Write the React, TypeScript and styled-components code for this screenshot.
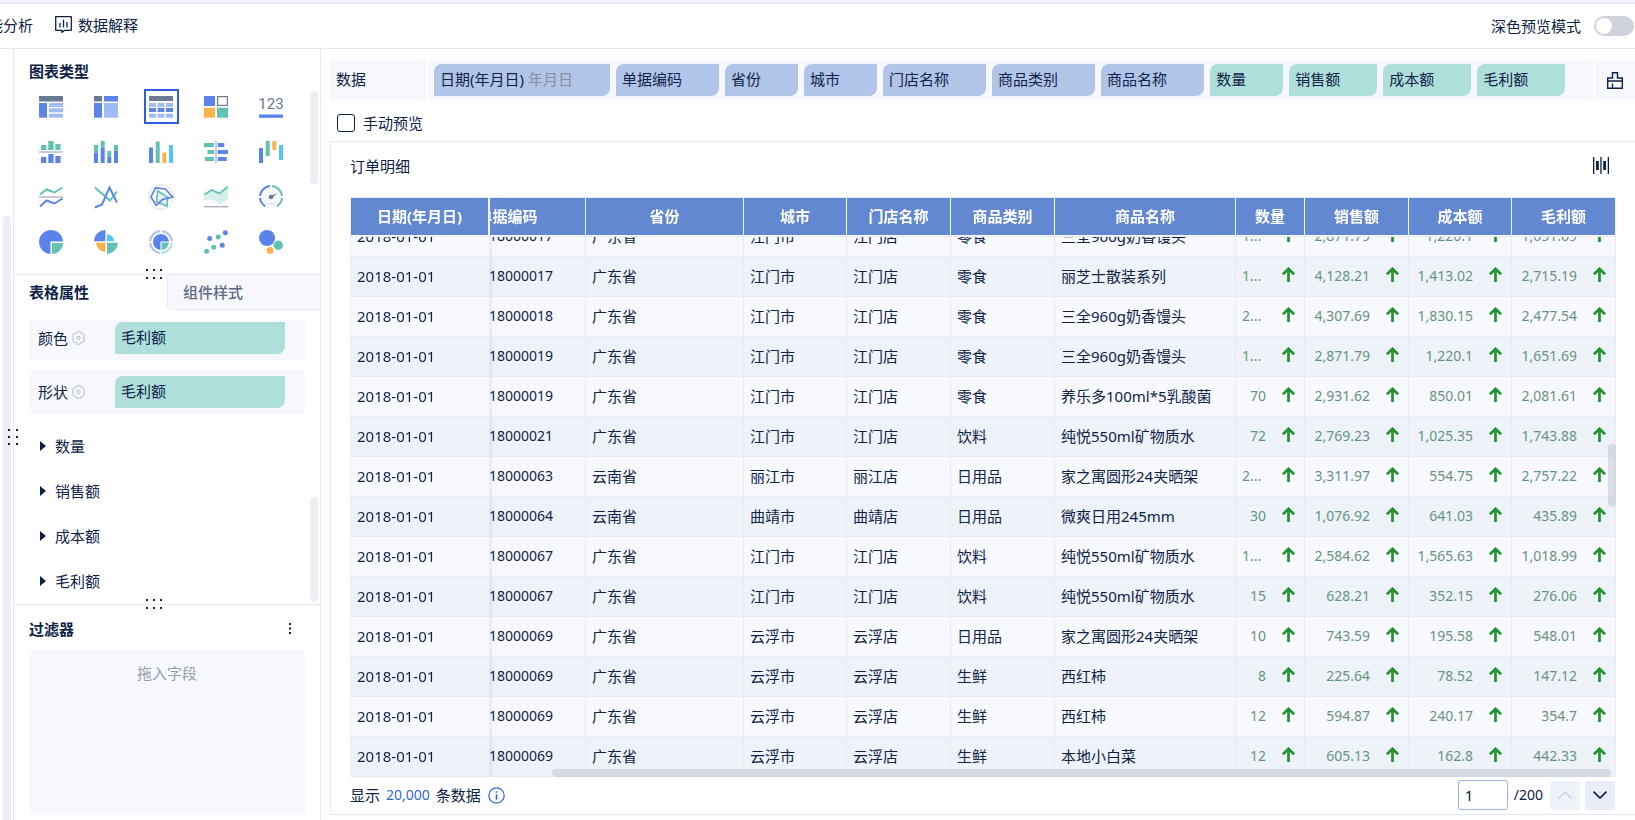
import React, { useLayoutEffect, useRef } from "react";
import styled, { createGlobalStyle } from "styled-components";

const INK = "#0e2247";
const LINE = "#e4e8f2";
const BLUE = "#5b84ea";
const SKY = "#9fbcf5";
const TEAL = "#62c0b5";
const ORANGE = "#fdb24c";
const CYAN = "#52c7f5";
const SLATE = "#6b7a93";
const SILVER = "#c6cbd5";

const GlobalStyle = createGlobalStyle`
  * { box-sizing: border-box; }
  body {
    margin: 0;
    color: ${INK};
    background: #fff;
    font-family: "Noto Sans", "Noto Sans CJK SC", sans-serif;
    font-size: 15px;
    line-height: 20px;
  }
  button, input { font: inherit; color: inherit; }
  button { padding: 0; border: 0; background: none; cursor: pointer; }
  svg { display: block; flex: none; }
  h2 { margin: 0; font-size: 15px; line-height: 20px; }
`;

const Page = styled.div`
  display: flex;
  flex-direction: column;
  height: 100vh;
  overflow: hidden;
`;

const TopBar = styled.header`
  display: flex;
  align-items: center;
  justify-content: space-between;
  flex: none;
  height: 49px;
  padding: 0 1px 0 0;
  border-top: 3px solid #edf1f8;
  border-bottom: 1px solid ${LINE};
  box-shadow: inset 0 1px 0 ${LINE};
`;

const Nav = styled.nav`
  display: flex;
  gap: 22px;
  margin-left: -27px;
  padding-bottom: 2px;
`;

const NavButton = styled.button`
  display: flex;
  align-items: center;
  gap: 6px;
`;

const SwitchLabel = styled.label`
  display: flex;
  align-items: center;
  gap: 13px;
`;

const Switch = styled.input`
  appearance: none;
  width: 40px;
  height: 20px;
  margin: 0;
  padding: 2px;
  border-radius: 10px;
  background: #cfd2da;
  &::before {
    content: "";
    display: block;
    width: 16px;
    height: 16px;
    border-radius: 50%;
    background: #fff;
  }
  &:checked { background: #2f5fd9; }
  &:checked::before { margin-left: 20px; }
`;

const Body = styled.div`
  display: flex;
  flex: 1;
  min-height: 0;
`;

const Rail = styled.div`
  position: relative;
  flex: none;
  width: 14px;
  padding: 167px 2px 0 3px;
  border-right: 1px solid ${LINE};
`;

const RailTrack = styled.div`
  height: 100%;
  border-radius: 4px 4px 0 0;
  background: #edeef3;
`;

const Grip = styled.svg<{ $left: number; $top: string }>`
  position: absolute;
  z-index: 3;
  left: ${(p) => p.$left}px;
  top: ${(p) => p.$top};
  fill: ${INK};
`;

const Sidebar = styled.aside`
  display: flex;
  flex-direction: column;
  flex: none;
  width: 307px;
  border-right: 1px solid ${LINE};
`;

const Thumb = styled.span<{ $top?: number; $bottom?: number; $height: number }>`
  position: absolute;
  right: 2px;
  width: 8px;
  height: ${(p) => p.$height}px;
  ${(p) => (p.$top !== undefined ? `top: ${p.$top}px;` : `bottom: ${p.$bottom}px;`)}
  border-radius: 4px;
  background: #edeef3;
`;

const ChartSection = styled.section`
  position: relative;
  flex: none;
  height: 226px;
  padding: 12px 15px 0;
  border-bottom: 1px solid ${LINE};
`;

const ChartGrid = styled.div`
  display: grid;
  grid-template-columns: repeat(5, 35px);
  gap: 10px 20px;
  margin: 8px 0 0 5px;
`;

const ChartButton = styled.button<{ $active: boolean }>`
  display: flex;
  align-items: center;
  height: 35px;
  padding-left: 3px;
  border: 2px solid ${(p) => (p.$active ? "#2d5fdb" : "transparent")};
`;

const PropSection = styled.section`
  position: relative;
  flex: 1;
  min-height: 0;
  border-bottom: 1px solid ${LINE};
`;

const Tabs = styled.div`
  display: grid;
  grid-template-columns: 1fr 1fr;
`;

const Tab = styled.button<{ $active?: boolean }>`
  height: 35px;
  padding: 0 15px 1px;
  text-align: left;
  font-weight: ${(p) => (p.$active ? 700 : 500)};
  ${(p) =>
    !p.$active &&
    `
    color: #5c6a84;
    background: #f7f8fd;
    border-left: 1px solid ${LINE};
    border-bottom: 1px solid ${LINE};
    border-bottom-left-radius: 5px;
  `}
`;

const PropRow = styled.div<{ $height: number }>`
  display: flex;
  align-items: center;
  height: ${(p) => p.$height}px;
  margin: 10px 15px 0;
  padding: 0 20px ${(p) => (p.$height < 44 ? 4 : 0)}px 9px;
  background: #f7f8fd;
  color: ${INK};
`;

const PropName = styled.span`
  display: flex;
  align-items: center;
  gap: 4px;
  width: 77px;
`;

const Pill = styled.button<{ $kind: "dimension" | "measure"; $grow?: boolean }>`
  flex: ${(p) => (p.$grow ? 1 : "none")};
  height: 32px;
  padding: 0 37px 2px 6px;
  border-radius: 8px 0 8px 0;
  text-align: left;
  white-space: nowrap;
  background: ${(p) => (p.$kind === "dimension" ? "#b1c5e8" : "#afdfda")};
`;

const PillNote = styled.span`
  margin-left: 4px;
  color: #868fa5;
`;

const FoldList = styled.div`
  display: flex;
  flex-direction: column;
  gap: 25px;
  padding: 22px 26px 0;
`;

const FoldButton = styled.button`
  display: flex;
  align-items: center;
  gap: 9px;
  height: 20px;
`;

const FilterSection = styled.section`
  display: flex;
  flex-direction: column;
  flex: none;
  height: 215px;
  padding: 14px 15px 5px;
`;

const FilterHead = styled.div`
  display: flex;
  justify-content: space-between;
  align-items: center;
  padding-right: 13px;
`;

const DropZone = styled.div`
  flex: 1;
  margin-top: 11px;
  padding-top: 13px;
  background: #f7f8fd;
  color: #959eb0;
  text-align: center;
`;

const Main = styled.main`
  display: flex;
  flex-direction: column;
  flex: 1;
  min-width: 0;
  padding: 10px 0 5px 9px;
`;

const DataBar = styled.div`
  display: flex;
  flex: none;
  gap: 2px;
  height: 42px;
`;

const DataLabel = styled.div`
  width: 96px;
  padding: 10px 6px;
  background: #f7f8fd;
`;

const PillList = styled.div`
  display: flex;
  align-items: center;
  gap: 6px;
  flex: 1;
  min-width: 0;
  padding: 0 6px;
  overflow: hidden;
  background: #f7f8fd;
`;

const ClearButton = styled.button`
  display: flex;
  align-items: center;
  width: 40px;
  padding-left: 12px;
  background: #f7f8fd;
`;

const ManualLabel = styled.label`
  display: flex;
  align-items: center;
  gap: 8px;
  flex: none;
  height: 40px;
  padding: 4px 7px 0;
`;

const CheckBox = styled.input`
  appearance: none;
  width: 18px;
  height: 18px;
  margin: 0;
  border: 1px solid ${INK};
  border-radius: 3px;
  background: #fff;
  &:checked { background: #2f5fd9; }
`;

const Card = styled.section`
  display: flex;
  flex-direction: column;
  flex: 1;
  min-height: 0;
  border: 1px solid ${LINE};
  border-right: 0;
  padding: 0 19px 0 19px;
`;

const CardHead = styled.div`
  display: flex;
  align-items: center;
  justify-content: space-between;
  flex: none;
  height: 55px;
  padding: 0 7px 8px 0;
`;

const TableFrame = styled.div`
  position: relative;
  flex: 1;
  min-height: 0;
  border-left: 1px solid #e8edf7;
  border-top: 1px solid #e4e9f5;
`;

const Scroller = styled.div`
  width: 100%;
  height: 100%;
  overflow: auto;
  scrollbar-width: none;
`;

const Grid = styled.table`
  width: calc(100% + 60px);
  table-layout: fixed;
  border-collapse: separate;
  border-spacing: 0;
`;

const Th = styled.th<{ $frozen?: boolean }>`
  position: sticky;
  top: 0;
  z-index: ${(p) => (p.$frozen ? 3 : 2)};
  height: 38px;
  padding: 0 0 1px;
  border-right: ${(p) => (p.$frozen ? 2 : 1)}px solid #f0f4fc;
  border-bottom: 1px solid #fff;
  background: #6388d2;
  box-shadow: 0 1px 0 #e6eaf5;
  color: #fff;
  white-space: nowrap;
  ${(p) => p.$frozen && "left: 0;"}
`;

const Tr = styled.tr`
  --row: #f8f9fe;
  &:nth-child(even) { --row: #eef3fa; }
`;

const Td = styled.td<{ $frozen?: boolean; $code?: boolean }>`
  height: 40px;
  padding: 0 0 1px ${(p) => (p.$code ? 59 : 6)}px;
  border-right: 1px solid #e6eaf7;
  border-bottom: 1px solid #e6ebf7;
  background: var(--row);
  white-space: nowrap;
  font-size: ${(p) => (p.$code ? 14 : 15)}px;
  ${(p) =>
    p.$frozen &&
    `
    position: sticky;
    left: 0;
    z-index: 1;
    box-shadow: 1px 0 3px rgba(14, 34, 71, 0.12);
    clip-path: inset(0 -4px 0 0);
  `}
`;

const Measure = styled.div`
  display: flex;
  align-items: center;
  justify-content: flex-end;
  gap: 16px;
  padding-right: 9px;
  color: #67937f;
  font-size: 14px;
`;

const Quantity = styled.span<{ $cut: boolean }>`
  width: 24px;
  text-align: ${(p) => (p.$cut ? "left" : "right")};
`;

const TableThumb = styled.span<{ $dir: "x" | "y" }>`
  position: absolute;
  z-index: 4;
  border-radius: 4px;
  background: rgba(175, 182, 198, 0.4);
  ${(p) =>
    p.$dir === "x"
      ? "left: 201px; right: 5px; bottom: 0; height: 8px;"
      : "right: 0; top: calc(43% - 3px); width: 8px; height: 63px;"}
`;

const CardFoot = styled.div`
  display: flex;
  align-items: center;
  flex: none;
  height: 37px;
  padding-bottom: 1px;
`;

const Count = styled.strong`
  margin: 0 6px;
  font-size: 14px;
  font-weight: 400;
  color: #3566dc;
`;

const InfoButton = styled.button`
  margin: 0 auto 0 7px;
`;

const PageInput = styled.input`
  width: 50px;
  height: 30px;
  padding: 0 6px;
  border: 1px solid #9ab2e6;
  border-radius: 3px;
  outline: 0;
`;

const PageTotal = styled.span`
  margin: 0 7px 0 6px;
  font-size: 14px;
`;

const PageButton = styled.button<{ $gap?: boolean }>`
  display: flex;
  align-items: center;
  justify-content: center;
  width: 30px;
  height: 29px;
  margin-right: ${(p) => (p.$gap ? 5 : 1)}px;
  border-radius: 3px;
  background: #e8edf8;
  color: ${INK};
  &:disabled { background: #eef2fa; color: #cdd2de; }
`;

type R = [number, number, number, number, string];
const Rects = ({ list }: { list: R[] }) => (
  <>
    {list.map(([x, y, w, h, fill], i) => (
      <rect key={i} x={x} y={y} width={w} height={h} fill={fill} />
    ))}
  </>
);

const chartIcons: { name: string; art: React.ReactNode }[] = [
  {
    name: "分组表",
    art: (
      <Rects list={[[0, 1, 24, 5.5, SLATE], [0, 8, 8, 14.7, BLUE], [10, 8, 14, 4, SKY], [10, 13.3, 14, 4, SKY], [10, 18.7, 14, 4, SKY]]} />
    ),
  },
  {
    name: "交叉表",
    art: <Rects list={[[0, 1, 8, 5.5, SLATE], [10, 1, 14, 5.5, BLUE], [0, 8, 8, 14.7, BLUE], [10, 8, 14, 14.7, SKY]]} />,
  },
  {
    name: "明细表",
    art: (
      <Rects
        list={[
          [0, 1, 24, 5, SLATE],
          ...[0, 8.5, 17].flatMap((x): R[] => [[x, 8, 7, 4, SKY], [x, 13, 7, 4, BLUE], [x, 18.7, 7, 4, SKY]]),
        ]}
      />
    ),
  },
  {
    name: "颜色表格",
    art: (
      <>
        <Rects list={[[0, 1, 11, 10, BLUE], [0, 12.7, 11, 10, ORANGE], [13, 12.7, 11, 10, TEAL]]} />
        <rect x="13.6" y="1.6" width="9.8" height="8.8" fill="none" stroke={SLATE} strokeWidth="1.2" />
      </>
    ),
  },
  {
    name: "指标卡",
    art: (
      <>
        <text x="12" y="14" textAnchor="middle" fontFamily="Roboto, sans-serif" fontSize="15" fill={SLATE}>
          123
        </text>
        <rect y="19.5" width="24" height="3.3" fill={BLUE} />
      </>
    ),
  },
  {
    name: "对比柱状图",
    art: (
      <Rects
        list={[[2, 5, 5.3, 5, TEAL], [9.3, 1, 5.3, 9, TEAL], [16.3, 4, 5.3, 6, TEAL], [0, 11, 24, 2, SILVER], [2, 17, 5.3, 6, BLUE], [9.3, 14, 5.3, 9, BLUE], [16.3, 16, 5.3, 7, BLUE]]}
      />
    ),
  },
  {
    name: "堆积柱状图",
    art: (
      <Rects
        list={[[0, 5, 4, 7.5, TEAL], [0, 12.5, 4, 10.5, BLUE], [6.7, 1, 4, 6.5, TEAL], [6.7, 7.5, 4, 15.5, BLUE], [13.3, 11, 4, 6, TEAL], [13.3, 17, 4, 6, BLUE], [20, 5, 4, 6, TEAL], [20, 11, 4, 12, BLUE]]}
      />
    ),
  },
  {
    name: "多系列柱状图",
    art: <Rects list={[[0, 7.5, 4, 15.5, BLUE], [6.7, 1.5, 4, 21.5, TEAL], [13.3, 12.5, 4, 10.5, ORANGE], [20, 5, 4, 18, CYAN]]} />,
  },
  {
    name: "对比条形图",
    art: (
      <Rects
        list={[[0, 3, 10, 4, TEAL], [3.5, 10, 6.5, 4, TEAL], [1, 17, 9, 4, TEAL], [11, 1, 2, 22, SILVER], [13.7, 3, 6.6, 4, BLUE], [13.7, 10, 10.3, 4, BLUE], [13.7, 17, 9, 4, BLUE]]}
      />
    ),
  },
  {
    name: "瀑布图",
    art: <Rects list={[[0, 8, 4, 15, BLUE], [6.7, 1, 4, 15, TEAL], [13.3, 1, 4, 9, ORANGE], [20, 5, 4, 15, CYAN]]} />,
  },
  {
    name: "折线图",
    art: (
      <g fill="none" strokeWidth="2">
        <path d="M1 9.5 7.5 4.5 15.5 7.5 23.5 2.5" stroke={TEAL} />
        <path d="M0 12H24" stroke={SILVER} />
        <path d="M1 21.5 7.5 15.5 15.5 18.5 23.5 13.5" stroke={BLUE} />
      </g>
    ),
  },
  {
    name: "多系列折线图",
    art: (
      <g fill="none" strokeWidth="2">
        <path d="M.8 2.5 16 15.5 23 6.5" stroke={TEAL} />
        <path d="M.8 22.5 8 19.5 15.5 2.5 23 17.5" stroke={BLUE} />
      </g>
    ),
  },
  {
    name: "雷达图",
    art: (
      <g fill="none" strokeWidth="1.7">
        <circle cx="12" cy="12" r="12.4" stroke="#dde1e9" strokeWidth="1" />
        <path d="M8.7 5.7 18.7 12.5 18 21.3 7.5 16.5Z" stroke={TEAL} fill="#e4edf2" />
        <path d="M6.5 2.8 16.3 4 23.7 12 13.5 14.5 7.3 20.5 2 12Z" stroke={BLUE} />
      </g>
    ),
  },
  {
    name: "面积图",
    art: (
      <>
        <path d="M0 9.5 8 5 15.5 8.5 24 2V14.5L16 19 8 14.5 0 15.5Z" fill="#d5efeb" />
        <path d="M.3 9.5 8 5 15.5 8.5 23.7 1.8" fill="none" stroke={TEAL} strokeWidth="1.8" />
        <rect y="21" width="24" height="1.4" fill="#a9b1c0" />
      </>
    ),
  },
  {
    name: "仪表盘",
    art: (
      <>
        <circle cx="12" cy="12" r="11" fill="#f7f9fc" />
        <g fill="none" strokeWidth="2">
          <path d="M1 11A11 11 0 0 1 11 1" stroke={BLUE} />
          <path d="M1 13A11 11 0 0 0 6.2 21.3" stroke={BLUE} />
          <path d="M13 1A11 11 0 0 1 23 11" stroke={TEAL} />
          <path d="M23 13A11 11 0 0 1 17.8 21.3" stroke={TEAL} />
        </g>
        <circle cx="12" cy="12" r="2.3" fill={SLATE} />
        <path d="M11.5 11 18.5 8 12.6 13.2Z" fill={SLATE} />
        <rect x="8" y="18" width="8" height="1.4" fill="#dfe3ea" />
      </>
    ),
  },
  {
    name: "饼图",
    art: (
      <>
        <path d="M11.5 12.5V24A12 12 0 1 1 24 11.5H11.5Z" fill={BLUE} />
        <path d="M13 13H24A11 11 0 0 1 13 24Z" fill={TEAL} />
      </>
    ),
  },
  {
    name: "玫瑰图",
    art: (
      <>
        <path d="M11.4 11.2H0A11.6 11.6 0 0 1 11.4 0Z" fill={BLUE} />
        <path d="M13 11.2V4A7.6 7.6 0 0 1 20 11.2Z" fill={CYAN} />
        <path d="M11.4 12.8V22A9.6 9.6 0 0 1 2 12.8Z" fill={ORANGE} />
        <path d="M13 12.8H24A11.6 11.6 0 0 1 13 24Z" fill={TEAL} />
      </>
    ),
  },
  {
    name: "多层饼图",
    art: (
      <>
        <g fill="none" strokeWidth="2.2">
          <path d="M1.1 11.2A11 11 0 0 1 11.2 1.1M12.8 1.1A11 11 0 0 1 22.9 11.2M1.1 12.8A11 11 0 0 0 11.2 22.9" stroke="#adc1f4" />
          <path d="M22.9 12.8A11 11 0 0 1 12.8 22.9" stroke="#b1dfda" />
        </g>
        <path d="M11.5 11.5V20A8 8 0 1 1 20 11.5Z" fill={BLUE} />
        <path d="M12.6 12.6H20A8 8 0 0 1 12.6 20Z" fill={TEAL} />
      </>
    ),
  },
  {
    name: "散点图",
    art: (
      <>
        <g fill={TEAL}>
          <circle cx="2.6" cy="21.2" r="2.5" />
          <circle cx="9.7" cy="17.2" r="2.5" />
          <circle cx="14.3" cy="7" r="2.5" />
        </g>
        <g fill={BLUE}>
          <circle cx="5.7" cy="8.5" r="2.5" />
          <circle cx="18.2" cy="15.3" r="2.5" />
          <circle cx="21.3" cy="2.7" r="2.5" />
        </g>
      </>
    ),
  },
  {
    name: "聚合气泡图",
    art: (
      <>
        <circle cx="8" cy="8" r="8" fill={BLUE} />
        <circle cx="19.3" cy="15.3" r="4.7" fill={TEAL} />
        <circle cx="11" cy="20.4" r="3.4" fill={ORANGE} />
      </>
    ),
  },
];

const Gear = () => (
  <svg width="13" height="14" viewBox="0 0 13 14" fill="none" stroke="#c3c8d3" strokeWidth="1.2">
    <path d="M4.8.9H8.2L9 2.5 11 2.6 12.4 5.4 11.5 7 12.4 8.6 11 11.4 9 11.5 8.2 13.1H4.8L4 11.5 2 11.4.6 8.6 1.5 7 .6 5.4 2 2.6 4 2.5Z" strokeLinejoin="round" />
    <circle cx="6.5" cy="7" r="1.6" />
  </svg>
);

const Arrow = () => (
  <svg width="13" height="15" viewBox="0 0 13 15" fill="none" stroke="#239331" strokeWidth="2.7">
    <path d="M6.5 15V2M.9 7.2 6.5 1.8 12.1 7.2" />
  </svg>
);

const ArrowSlot = styled.span`
  padding-bottom: 3px;
`;

const HorizontalGrip = () => (
  <Grip $left={132} $top="calc(100% - 5px)" width="17" height="11" viewBox="0 0 17 11">
    {[0, 7, 14].flatMap((x) => [0, 8].map((y) => <rect key={`${x}-${y}`} x={x} y={y} width="2" height="2" />))}
  </Grip>
);

const dimensions = ["单据编码", "省份", "城市", "门店名称", "商品类别", "商品名称"];
const measures = ["数量", "销售额", "成本额", "毛利额"];
const widths = [139, 156, 158, 103, 104, 104, 181, 69, 104, 103, 104];

const rows: string[][] = [
  ["18000017", "广东省", "江门市", "江门店", "零食", "三全960g奶香馒头", "1...", "2,871.79", "1,220.1", "1,651.69"],
  ["18000017", "广东省", "江门市", "江门店", "零食", "丽芝士散装系列", "1...", "4,128.21", "1,413.02", "2,715.19"],
  ["18000018", "广东省", "江门市", "江门店", "零食", "三全960g奶香馒头", "2...", "4,307.69", "1,830.15", "2,477.54"],
  ["18000019", "广东省", "江门市", "江门店", "零食", "三全960g奶香馒头", "1...", "2,871.79", "1,220.1", "1,651.69"],
  ["18000019", "广东省", "江门市", "江门店", "零食", "养乐多100ml*5乳酸菌", "70", "2,931.62", "850.01", "2,081.61"],
  ["18000021", "广东省", "江门市", "江门店", "饮料", "纯悦550ml矿物质水", "72", "2,769.23", "1,025.35", "1,743.88"],
  ["18000063", "云南省", "丽江市", "丽江店", "日用品", "家之寓圆形24夹晒架", "2...", "3,311.97", "554.75", "2,757.22"],
  ["18000064", "云南省", "曲靖市", "曲靖店", "日用品", "微爽日用245mm", "30", "1,076.92", "641.03", "435.89"],
  ["18000067", "广东省", "江门市", "江门店", "饮料", "纯悦550ml矿物质水", "1...", "2,584.62", "1,565.63", "1,018.99"],
  ["18000067", "广东省", "江门市", "江门店", "饮料", "纯悦550ml矿物质水", "15", "628.21", "352.15", "276.06"],
  ["18000069", "广东省", "云浮市", "云浮店", "日用品", "家之寓圆形24夹晒架", "10", "743.59", "195.58", "548.01"],
  ["18000069", "广东省", "云浮市", "云浮店", "生鲜", "西红柿", "8", "225.64", "78.52", "147.12"],
  ["18000069", "广东省", "云浮市", "云浮店", "生鲜", "西红柿", "12", "594.87", "240.17", "354.7"],
  ["18000069", "广东省", "云浮市", "云浮店", "生鲜", "本地小白菜", "12", "605.13", "162.8", "442.33"],
];

function OrderTable() {
  const scroller = useRef<HTMLDivElement>(null);
  useLayoutEffect(() => {
    scroller.current?.scrollTo(60, 19);
  }, []);
  return (
    <TableFrame>
      <Scroller ref={scroller}>
        <Grid>
          <colgroup>
            {widths.map((w, i) => (
              <col key={i} width={w} />
            ))}
          </colgroup>
          <thead>
            <tr>
              {["日期(年月日)", ...dimensions, ...measures].map((title, i) => (
                <Th key={title} scope="col" $frozen={i === 0}>
                  {title}
                </Th>
              ))}
            </tr>
          </thead>
          <tbody>
            {rows.map((row, r) => (
              <Tr key={r}>
                <Td $frozen>2018-01-01</Td>
                {row.map((value, i) =>
                  i < 6 ? (
                    <Td key={i} $code={i === 0}>
                      {value}
                    </Td>
                  ) : (
                    <Td key={i}>
                      <Measure>
                        {i === 6 ? <Quantity $cut={value.endsWith("...")}>{value}</Quantity> : value}
                        <ArrowSlot>
                          <Arrow />
                        </ArrowSlot>
                      </Measure>
                    </Td>
                  )
                )}
              </Tr>
            ))}
          </tbody>
        </Grid>
      </Scroller>
      <TableThumb $dir="x" />
      <TableThumb $dir="y" />
    </TableFrame>
  );
}

export default function App() {
  return (
    <Page>
      <GlobalStyle />
      <TopBar>
        <Nav>
          <NavButton>智能分析</NavButton>
          <NavButton>
            <svg width="17" height="17" viewBox="0 0 17 17" fill="none" stroke={INK} strokeWidth="1.3">
              <path d="M.7.7H16.3V14.3H9.5L7 16.5V14.3H.7Z" strokeLinejoin="round" />
              <path d="M5 7V11.5M8.5 3.8V11.5M12 6V11.5" />
            </svg>
            数据解释
          </NavButton>
        </Nav>
        <SwitchLabel>
          深色预览模式
          <Switch type="checkbox" role="switch" />
        </SwitchLabel>
      </TopBar>
      <Body>
        <Rail>
          <RailTrack />
          <Grip $left={8} $top="calc(50% - 6px)" width="11" height="17" viewBox="0 0 11 17">
            {[0, 8].flatMap((x) => [0, 7, 14].map((y) => <rect key={`${x}-${y}`} x={x} y={y} width="2" height="2" />))}
          </Grip>
        </Rail>
        <Sidebar>
          <ChartSection>
            <h2>图表类型</h2>
            <ChartGrid>
              {chartIcons.map((icon) => (
                <ChartButton key={icon.name} $active={icon.name === "明细表"} aria-label={icon.name}>
                  <svg width="24" height="24" viewBox="0 0 24 24" overflow="visible">
                    {icon.art}
                  </svg>
                </ChartButton>
              ))}
            </ChartGrid>
            <Thumb $top={42} $height={93} />
            <HorizontalGrip />
          </ChartSection>
          <PropSection>
            <Tabs role="tablist">
              <Tab role="tab" aria-selected $active>
                表格属性
              </Tab>
              <Tab role="tab">组件样式</Tab>
            </Tabs>
            <PropRow $height={40}>
              <PropName>
                颜色 <Gear />
              </PropName>
              <Pill $kind="measure" $grow>
                毛利额
              </Pill>
            </PropRow>
            <PropRow $height={44}>
              <PropName>
                形状 <Gear />
              </PropName>
              <Pill $kind="measure" $grow>
                毛利额
              </Pill>
            </PropRow>
            <FoldList>
              {measures.map((name) => (
                <FoldButton key={name}>
                  <svg width="6" height="10" viewBox="0 0 6 10" fill={INK}>
                    <path d="M0 0 6 5 0 10Z" />
                  </svg>
                  {name}
                </FoldButton>
              ))}
            </FoldList>
            <Thumb $bottom={2} $height={105} />
            <HorizontalGrip />
          </PropSection>
          <FilterSection>
            <FilterHead>
              <h2>过滤器</h2>
              <button aria-label="更多">
                <svg width="4" height="12" viewBox="0 0 4 12" fill={INK}>
                  <rect x="1" y="0" width="2" height="2" />
                  <rect x="1" y="4.5" width="2" height="2" />
                  <rect x="1" y="9" width="2" height="2" />
                </svg>
              </button>
            </FilterHead>
            <DropZone>拖入字段</DropZone>
          </FilterSection>
        </Sidebar>
        <Main>
          <DataBar>
            <DataLabel>数据</DataLabel>
            <PillList>
              <Pill $kind="dimension">
                日期(年月日)<PillNote>年月日</PillNote>
              </Pill>
              {dimensions.map((name) => (
                <Pill key={name} $kind="dimension">
                  {name}
                </Pill>
              ))}
              {measures.map((name) => (
                <Pill key={name} $kind="measure">
                  {name}
                </Pill>
              ))}
            </PillList>
            <ClearButton aria-label="清空">
              <svg width="16" height="17" viewBox="0 0 16 17" fill="none" stroke={INK} strokeWidth="1.4">
                <path d="M.7 16.2V6H5.5V.8H10.5V6H15.3V16.2ZM.7 9H15.3M5.5 16V11.5" />
              </svg>
            </ClearButton>
          </DataBar>
          <ManualLabel>
            <CheckBox type="checkbox" />
            手动预览
          </ManualLabel>
          <Card>
            <CardHead>
              <span>订单明细</span>
              <button aria-label="列宽">
                <svg width="16" height="17" viewBox="0 0 16 17" fill={INK}>
                  <rect x="0" y="0" width="1.3" height="17" />
                  <rect x="3" y="4" width="2.8" height="9" />
                  <rect x="7.3" y="0" width="1.3" height="17" />
                  <rect x="10.2" y="4" width="2.8" height="9" />
                  <rect x="14.7" y="0" width="1.3" height="17" />
                </svg>
              </button>
            </CardHead>
            <OrderTable />
            <CardFoot>
              显示<Count>20,000</Count>条数据
              <InfoButton aria-label="说明">
                <svg width="17" height="17" viewBox="0 0 17 17" fill="none" stroke="#3566dc" strokeWidth="1.2">
                  <circle cx="8.5" cy="8.5" r="7.7" />
                  <path d="M8.5 7.2V12.8M8.5 4.2V5.8" strokeWidth="1.6" />
                </svg>
              </InfoButton>
              <PageInput aria-label="页码" defaultValue="1" />
              <PageTotal>/200</PageTotal>
              <PageButton $gap disabled aria-label="上一页">
                <svg width="14" height="8" viewBox="0 0 14 8" fill="none" stroke="currentColor" strokeWidth="1.5">
                  <path d="M.6 7.4 7 1 13.4 7.4" />
                </svg>
              </PageButton>
              <PageButton aria-label="下一页">
                <svg width="14" height="8" viewBox="0 0 14 8" fill="none" stroke="currentColor" strokeWidth="1.7">
                  <path d="M.6.6 7 7 13.4.6" />
                </svg>
              </PageButton>
            </CardFoot>
          </Card>
        </Main>
      </Body>
    </Page>
  );
}
